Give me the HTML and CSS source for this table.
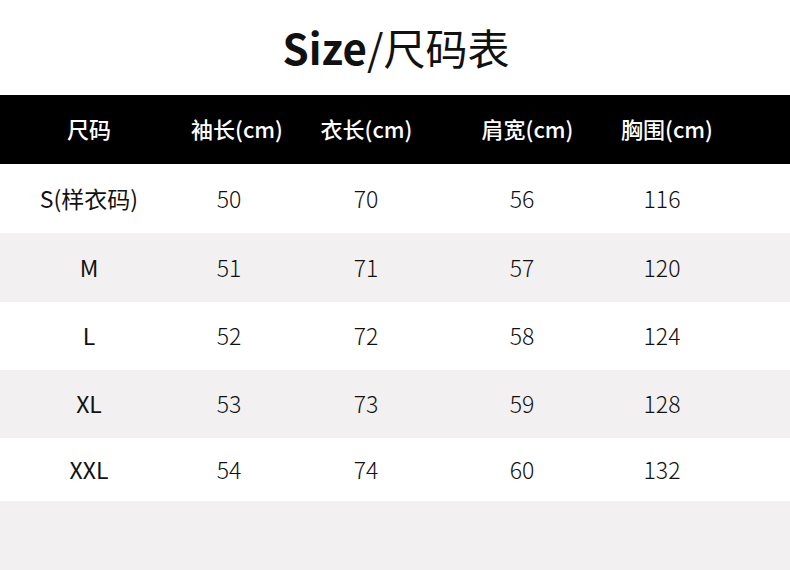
FILE: index.html
```html
<!DOCTYPE html>
<html lang="zh">
<head>
<meta charset="utf-8">
<link rel="stylesheet" href="styles.css">
</head>
<body>
<div class="page">
  <h1 class="title"><b>Size</b>/尺码表</h1>
  <div class="head">
    <div>尺码</div><div>袖长(cm)</div><div>衣长(cm)</div><div>肩宽(cm)</div><div>胸围(cm)</div><div></div>
  </div>
  <div class="row r1"><div class="size">S(样衣码)</div><div>50</div><div>70</div><div>56</div><div>116</div><div></div></div>
  <div class="row r2 alt"><div class="size">M</div><div>51</div><div>71</div><div>57</div><div>120</div><div></div></div>
  <div class="row r3"><div class="size">L</div><div>52</div><div>72</div><div>58</div><div>124</div><div></div></div>
  <div class="row r4 alt"><div class="size">XL</div><div>53</div><div>73</div><div>59</div><div>128</div><div></div></div>
  <div class="row r5"><div class="size">XXL</div><div>54</div><div>74</div><div>60</div><div>132</div><div></div></div>
  <div class="tail"></div>
</div>
</body>
</html>
```
FILE: styles.css
```css
html, body {
  margin: 0;
  padding: 0;
  background: #fff;
}
body {
  font-family: "Noto Sans CJK SC", "Noto Sans", sans-serif;
  color: #111;
}
.page {
  width: 790px;
  height: 570px;
  display: flex;
  flex-direction: column;
  overflow: hidden;
}
.title {
  margin: 0;
  height: 95px;
  display: flex;
  align-items: center;
  justify-content: center;
  font-size: 42px;
  font-weight: 400;
  line-height: 1;
  color: #111;
  padding-left: 2px;
  padding-bottom: 2px;
  box-sizing: border-box;
}
.title b {
  font-weight: 700;
}
.head {
  height: 69px;
  padding-bottom: 3px;
  box-sizing: border-box;
  background: #000;
  color: #fff;
  display: grid;
  grid-template-columns: 178px 118px 141px 181px 98px 1fr;
  align-items: center;
  font-size: 22px;
  font-weight: 500;
}
.head > div, .row > div {
  text-align: center;
  white-space: nowrap;
}
.row {
  display: grid;
  grid-template-columns: 178px 102px 172px 140px 140px 1fr;
  align-items: center;
  font-size: 23px;
  font-weight: 300;
  color: #111;
  background: #fff;
  padding-bottom: 2px;
  box-sizing: border-box;
}
.row > .size {
  font-weight: 400;
}
.row.alt {
  background: #f2f0f1;
}
.r1, .r2 { height: 69px; }
.r3, .r4 { height: 68px; }
.r5 { height: 63px; }
.tail {
  flex: 1;
  background: #f2f0f1;
}
```
